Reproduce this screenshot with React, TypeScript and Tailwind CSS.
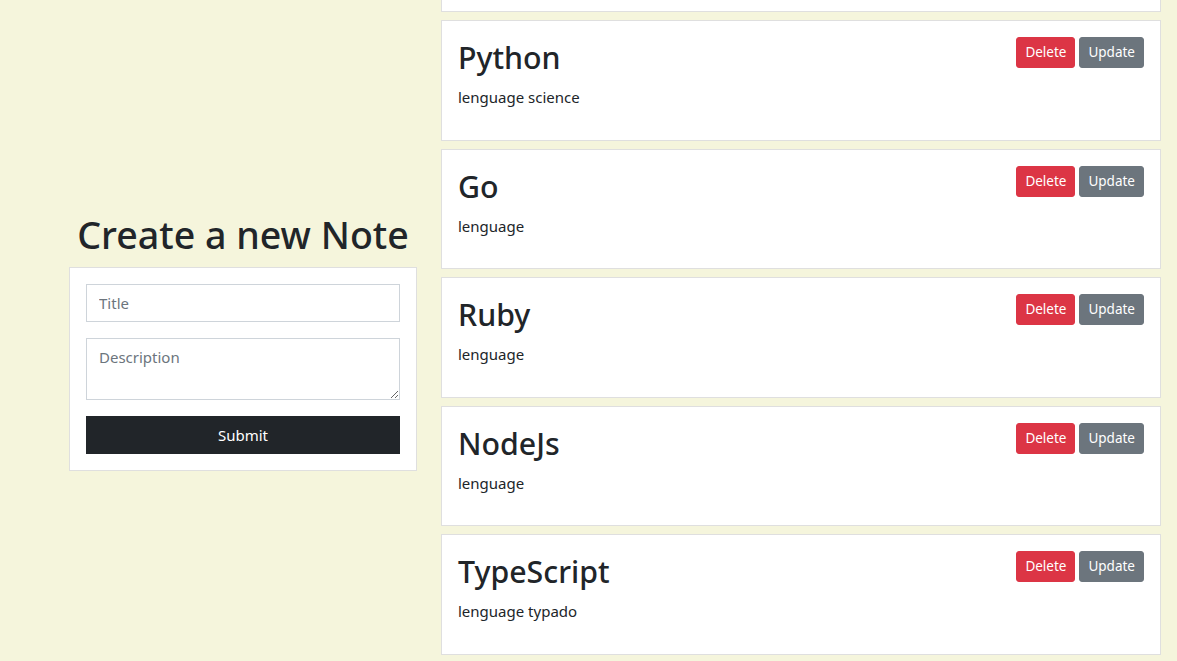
const notes = [
  { title: "Python", description: "lenguage science" },
  { title: "Go", description: "lenguage" },
  { title: "Ruby", description: "lenguage" },
  { title: "NodeJs", description: "lenguage" },
  { title: "TypeScript", description: "lenguage typado" },
];

const font = "font-['Segoe_UI','Noto_Sans',sans-serif]";

function NoteCard({ title, description }: { title: string; description: string }) {
  return (
    <div className="bg-white border border-[#dfdfdf] h-[120.5px] shrink-0">
      <div className="flex justify-between items-start p-4">
        <div className="pt-[2px]">
          <h2 className="text-[30.3px] leading-[38px] font-medium text-[#212529] mb-2">{title}</h2>
          <p className="text-[15px] leading-6 text-[#212529]">{description}</p>
        </div>
        <div className="flex gap-1">
          <button className="bg-[#dc3545] text-white text-[13.5px] leading-[21px] px-2 py-1 rounded-[3px] border border-[#dc3545]">
            Delete
          </button>
          <button className="bg-[#6c757d] text-white text-[13.5px] leading-[21px] px-2 py-1 rounded-[3px] border border-[#6c757d]">
            Update
          </button>
        </div>
      </div>
    </div>
  );
}

export default function App() {
  return (
    <div className={`${font} h-[661px] overflow-hidden bg-[#f5f5dc] flex gap-[24px] pl-[69px]`}>
      {/* Form column */}
      <div className="w-[348px] pt-[211px] shrink-0">
        <h1 className="text-center text-[37.6px] leading-[48px] font-medium text-[#212529] mb-2 whitespace-nowrap">
          Create a new Note
        </h1>
        <div className="bg-white border border-[#dfdfdf] p-4">
          <input
            type="text"
            placeholder="Title"
            className="block w-full h-[38px] px-3 py-1.5 text-[15px] text-[#212529] border border-[#ced4da] placeholder:text-[#6c757d] mb-4 outline-none"
          />
          <textarea
            rows={2}
            placeholder="Description"
            className="block w-full h-[62px] px-3 py-1.5 text-[15px] leading-6 text-[#212529] border border-[#ced4da] placeholder:text-[#6c757d] mb-4 outline-none"
          />
          <button className="block w-full h-[38px] bg-[#212529] text-white text-[15px]">Submit</button>
        </div>
      </div>

      {/* Notes list */}
      <div className="w-[720px] flex flex-col gap-2 shrink-0">
        <div className="bg-white border-x border-b border-[#dfdfdf] h-[12px] shrink-0" />
        {notes.map((n) => (
          <NoteCard key={n.title} title={n.title} description={n.description} />
        ))}
      </div>
    </div>
  );
}
